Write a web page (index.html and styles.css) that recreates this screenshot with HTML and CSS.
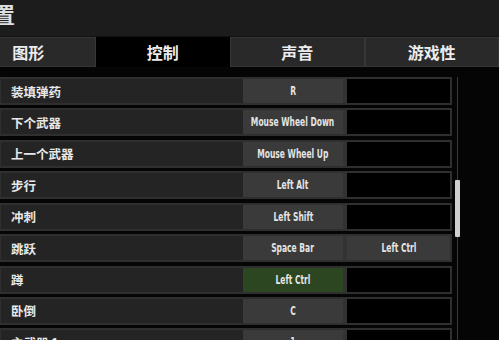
FILE: index.html
```html
<!DOCTYPE html>
<html lang="zh-CN">
<head>
<meta charset="UTF-8" />
<meta name="viewport" content="width=device-width, initial-scale=1.0" />
<title>设置 – 控制</title>
<link rel="stylesheet" href="styles.css">
</head>
<body>

<!-- ===== TITLE ===== -->
<header class="title-bar"><span class="title">置</span></header>

<!-- ===== TABS ===== -->
<nav class="tabs">
  <div class="tab">图形</div>
  <div class="tab active">控制</div>
  <div class="tab">声音</div>
  <div class="tab">游戏性</div>
</nav>

<!-- ===== KEY BINDINGS ===== -->
<main class="panel">
  <div class="binds">
    <div class="row"><span class="label">装填弹药</span><span class="key"><b>R</b></span><span class="key empty"></span></div>
    <div class="row"><span class="label">下个武器</span><span class="key"><b>Mouse Wheel Down</b></span><span class="key empty"></span></div>
    <div class="row"><span class="label">上一个武器</span><span class="key"><b>Mouse Wheel Up</b></span><span class="key empty"></span></div>
    <div class="row"><span class="label">步行</span><span class="key"><b>Left Alt</b></span><span class="key empty"></span></div>
    <div class="row"><span class="label">冲刺</span><span class="key"><b>Left Shift</b></span><span class="key empty"></span></div>
    <div class="row"><span class="label">跳跃</span><span class="key"><b>Space Bar</b></span><span class="key"><b>Left Ctrl</b></span></div>
    <div class="row"><span class="label">蹲</span><span class="key selected"><b>Left Ctrl</b></span><span class="key empty"></span></div>
    <div class="row"><span class="label">卧倒</span><span class="key"><b>C</b></span><span class="key empty"></span></div>
    <div class="row"><span class="label">主武器 1</span><span class="key"><b>1</b></span><span class="key empty"></span></div>
  </div>
  <div class="scrollbar"><div class="thumb"></div></div>
</main>

</body>
</html>
```

FILE: styles.css
```css
:root{
  --title-bg:#1c1c1c;
  --tab-bg:#292929;
  --tab-border:#363636;
  --row-bg:#242424;
  --row-border:#2f2f2f;
  --key-bg:#3a3a3a;
  --key-sel:#2b4620;
  --text:#e6e6e6;
}
html,body{height:100%;}
body{
  margin:0;background:#050505;color:var(--text);
  font-family:"Noto Sans CJK SC","Liberation Sans",sans-serif;
  overflow:hidden;
}

/* title */
.title-bar{
  height:37px;background:var(--title-bg);
  border-bottom:1px solid #111;box-sizing:border-box;
}
.title{
  display:inline-block;margin-left:-7px;
  font-size:22px;font-weight:700;line-height:27px;color:#dedede;
}

/* tabs */
.tabs{
  display:grid;grid-template-columns:repeat(4,134.5px);
  margin-left:-39px;height:30px;
}
.tab{
  display:flex;align-items:center;justify-content:center;
  background:var(--tab-bg);border:1px solid var(--tab-border);
  font-size:16px;font-weight:700;color:#ececec;
}
.tab.active{background:#000;border-color:#000;}

/* bindings */
.panel{display:flex;margin-top:10px;}
.binds{width:452px;}
.row{
  display:flex;height:28px;margin-bottom:3.43px;box-sizing:border-box;
  background:var(--row-bg);border:2px solid var(--row-border);
  border-left-width:1px;
}
.label{
  flex:1;display:flex;align-items:center;padding-left:10px;
  font-size:12.5px;font-weight:700;color:#e8e8e8;
}
.key{
  display:flex;align-items:center;justify-content:center;
  width:100px;background:var(--key-bg);
  font-family:"DejaVu Sans Condensed","DejaVu Sans",sans-serif;
  font-stretch:condensed;font-size:12px;color:#e4e4e4;
}
/* the game uses a very narrow face; squeeze the condensed one */
.key b{display:inline-block;white-space:nowrap;transform:scaleX(.7);}
.key + .key{width:103px;border-left:4px solid #333;}
.key.empty{background:#000;}
.key.selected{background:var(--key-sel);}

/* scrollbar */
.scrollbar{position:relative;width:10px;margin-left:2px;}
.scrollbar::before{
  content:"";position:absolute;left:3px;top:0;bottom:0;
  width:1px;background:#3a3a3a;
}
.thumb{
  position:absolute;left:1px;top:103px;width:5px;height:57px;
  background:#cfcfcf;border-radius:1px;
}
```
